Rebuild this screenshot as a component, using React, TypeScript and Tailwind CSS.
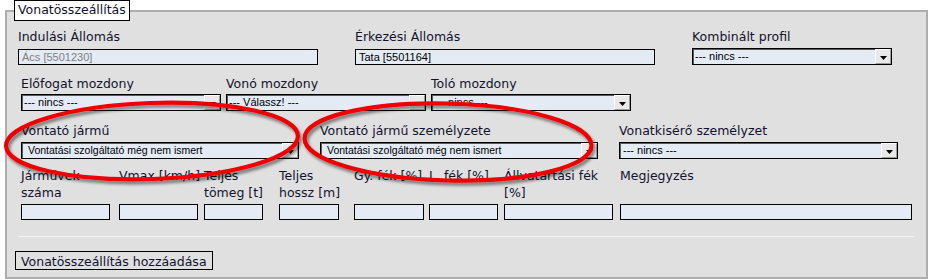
import React from "react";

const labelFont = { fontFamily: '"DejaVu Sans", Verdana, sans-serif' };
const fieldFont = { fontFamily: '"Liberation Sans", Arial, sans-serif' };

function TextBox(props: { value?: string; width: string; muted?: boolean }) {
  return (
    <div
      className={[
        "flex h-[16px] items-center border border-black bg-[#e4ebf5] pl-[3px] text-[11px] leading-[14px] whitespace-nowrap overflow-hidden",
        props.width,
        props.muted ? "text-[#808080]" : "text-black",
      ].join(" ")}
      style={fieldFont}
    >
      {props.value ?? ""}
    </div>
  );
}

function DropArrow() {
  return (
    <span className="flex h-full w-[16px] shrink-0 items-center justify-center border-t border-l border-t-white border-l-white border-r border-b border-r-[#9c9c9c] border-b-[#9c9c9c] bg-[#e9e9e9] pt-[3px]">
      <svg aria-hidden="true" viewBox="0 0 7 4" className="h-[4px] w-[7px]">
        <path d="M0 0h7L3.5 4z" fill="#000" />
      </svg>
    </span>
  );
}

function SelectBox(props: { value: string; width: string; pad?: string; small?: boolean }) {
  return (
    <div
      className={[
        "flex h-[17px] items-stretch border border-black bg-[#e4ebf5] shadow-[inset_1px_1px_0_#5a5a5a]",
        props.width,
      ].join(" ")}
    >
      <span
        className={[
          "flex flex-1 items-center overflow-hidden whitespace-nowrap text-black",
          props.small ? "text-[10.5px]" : "text-[11px]",
          props.pad ?? "pl-[2px]",
        ].join(" ")}
        style={fieldFont}
      >
        {props.value}
      </span>
      <DropArrow />
    </div>
  );
}

function Label(props: { children: React.ReactNode; className?: string }) {
  return (
    <div
      className={["text-[12.5px] leading-[15px] whitespace-nowrap text-[#12122e]", props.className ?? ""].join(" ")}
      style={labelFont}
    >
      {props.children}
    </div>
  );
}

function StatCell(props: { label: React.ReactNode; width: string }) {
  return (
    <div className="flex flex-col">
      <div
        className="h-[34px] text-[12.5px] leading-[17px] whitespace-nowrap text-[#12122e]"
        style={labelFont}
      >
        {props.label}
      </div>
      <div className="mt-[3px]">
        <TextBox width={props.width} />
      </div>
    </div>
  );
}

function Ellipses() {
  return (
    <svg
      aria-hidden="true"
      className="pointer-events-none absolute left-0 top-0 h-[280px] w-[932px]"
      viewBox="0 0 932 280"
    >
      <defs>
        <filter id="sh" x="-10%" y="-20%" width="120%" height="140%">
          <feDropShadow dx="2" dy="3" stdDeviation="1.5" floodColor="#000" floodOpacity="0.45" />
        </filter>
      </defs>
      <g filter="url(#sh)" fill="none" stroke="#ee0000" strokeWidth="4.2">
        <ellipse cx="152" cy="141" rx="146" ry="38" transform="rotate(-2 152 141)" />
        <ellipse cx="448" cy="142" rx="143.5" ry="38.5" transform="rotate(1.5 448 142)" />
      </g>
    </svg>
  );
}

export default function App() {
  return (
    <div className="relative h-[280px] w-[932px] overflow-hidden bg-white">
      <fieldset className="ml-[5px] h-[279px] w-[923px] border-2 border-[#adadad] bg-[#e0e0e0]">
        <legend
          className="ml-[7px] h-[21px] border border-black bg-white px-[3px] pt-px text-[12.5px] leading-[15px] text-[#12122e]"
          style={labelFont}
        >
          Vonatösszeállítás
        </legend>

        {/* stations */}
        <div className="mt-[8px] flex items-start gap-[37px] pl-[11px]">
          <div>
            <Label>Indulási Állomás</Label>
            <div className="mt-[5px]">
              <TextBox value="Ács [5501230]" width="w-[300px]" muted />
            </div>
          </div>
          <div>
            <Label>Érkezési Állomás</Label>
            <div className="mt-[5px]">
              <TextBox value="Tata [5501164]" width="w-[300px]" />
            </div>
          </div>
          <div>
            <Label>Kombinált profil</Label>
            <div className="mt-[4px]">
              <SelectBox value="--- nincs ---" width="w-[200px]" />
            </div>
          </div>
        </div>

        {/* locomotives */}
        <div className="mt-[11px] flex items-start gap-[5px] pl-[14px]">
          <div>
            <Label>Előfogat mozdony</Label>
            <div className="mt-[3px]">
              <SelectBox value="--- nincs ---" width="w-[200px]" />
            </div>
          </div>
          <div>
            <Label>Vonó mozdony</Label>
            <div className="mt-[3px]">
              <SelectBox value="--- Válassz! ---" width="w-[200px]" />
            </div>
          </div>
          <div>
            <Label>Toló mozdony</Label>
            <div className="mt-[3px]">
              <SelectBox value="--- nincs ---" width="w-[200px]" />
            </div>
          </div>
        </div>

        {/* traction + staff */}
        <div className="mt-[12px] flex items-start gap-[21px] pl-[14px]">
          <div>
            <Label>Vontató jármű</Label>
            <div className="mt-[4px]">
              <SelectBox value="Vontatási szolgáltató még nem ismert" width="w-[278px]" pad="pl-[6px]" small />
            </div>
          </div>
          <div>
            <Label>Vontató jármű személyzete</Label>
            <div className="mt-[4px]">
              <SelectBox value="Vontatási szolgáltató még nem ismert" width="w-[278px]" pad="pl-[6px]" small />
            </div>
          </div>
          <div>
            <Label>Vonatkisérő személyzet</Label>
            <div className="mt-[4px]">
              <SelectBox value="--- nincs ---" width="w-[279px]" pad="pl-[3px]" />
            </div>
          </div>
        </div>

        {/* train data */}
        <div className="mt-[8px] grid grid-cols-[98px_85px_75px_75px_75px_75px_116px_293px] pl-[14px]">
          <StatCell label={<>Járművek<br />száma</>} width="w-[89px]" />
          <StatCell label="Vmax [km/h]" width="w-[79px]" />
          <StatCell label={<>Teljes<br />tömeg [t]</>} width="w-[59px]" />
          <StatCell label={<>Teljes<br />hossz [m]</>} width="w-[60px]" />
          <StatCell label="Gy. fék [%]" width="w-[70px]" />
          <StatCell label="L. fék [%]" width="w-[69px]" />
          <StatCell label={<>Állvatartási fék<br />[%]</>} width="w-[109px]" />
          <StatCell label="Megjegyzés" width="w-[292px]" />
        </div>

        <div className="ml-[11px] mt-[16px] w-[896px] border-t border-[#f4f4f4]" />

        <div className="ml-[8px] mt-[14px] flex">
          <button
            type="button"
            className="h-[19px] border border-black px-[5px] pt-[2px] text-left text-[12.5px] leading-[15px] text-[#12122e]"
            style={labelFont}
          >
            Vonatösszeállítás hozzáadása
          </button>
        </div>
      </fieldset>
      <Ellipses />
    </div>
  );
}
